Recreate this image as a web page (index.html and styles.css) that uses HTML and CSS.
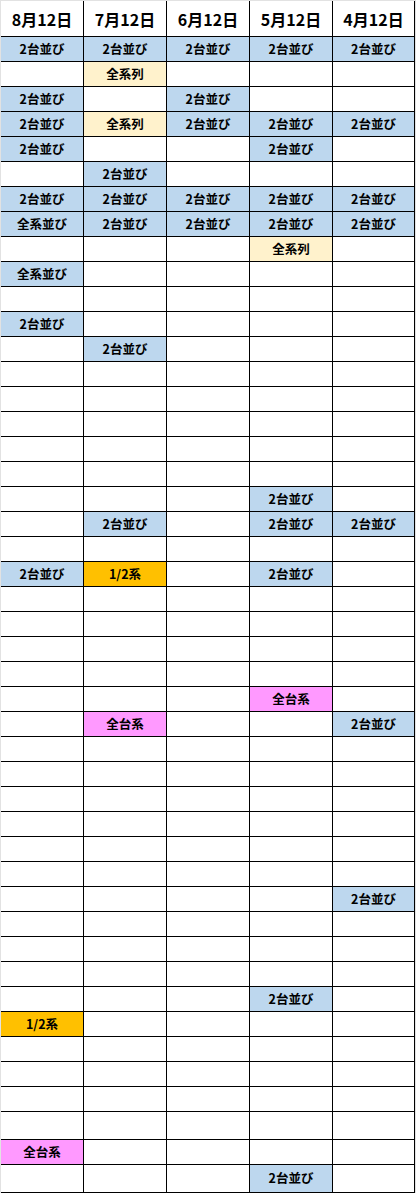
FILE: index.html
```html
<!DOCTYPE html>
<html lang="ja">
<head>
  <meta charset="UTF-8">
  <title>並び一覧</title>
  <link rel="stylesheet" href="styles.css">
</head>
<body>

<table class="sheet">
  <thead>
    <tr><th>8月12日</th><th>7月12日</th><th>6月12日</th><th>5月12日</th><th>4月12日</th></tr>
  </thead>
  <tbody>
    <tr><td class="blue">2台並び</td><td class="blue">2台並び</td><td class="blue">2台並び</td><td class="blue">2台並び</td><td class="blue">2台並び</td></tr>
    <tr><td></td><td class="cream">全系列</td><td></td><td></td><td></td></tr>
    <tr><td class="blue">2台並び</td><td></td><td class="blue">2台並び</td><td></td><td></td></tr>
    <tr><td class="blue">2台並び</td><td class="cream">全系列</td><td class="blue">2台並び</td><td class="blue">2台並び</td><td class="blue">2台並び</td></tr>
    <tr><td class="blue">2台並び</td><td></td><td></td><td class="blue">2台並び</td><td></td></tr>
    <tr><td></td><td class="blue">2台並び</td><td></td><td></td><td></td></tr>
    <tr><td class="blue">2台並び</td><td class="blue">2台並び</td><td class="blue">2台並び</td><td class="blue">2台並び</td><td class="blue">2台並び</td></tr>
    <tr><td class="blue">全系並び</td><td class="blue">2台並び</td><td class="blue">2台並び</td><td class="blue">2台並び</td><td class="blue">2台並び</td></tr>
    <tr><td></td><td></td><td></td><td class="cream">全系列</td><td></td></tr>
    <tr><td class="blue">全系並び</td><td></td><td></td><td></td><td></td></tr>
    <tr><td></td><td></td><td></td><td></td><td></td></tr>
    <tr><td class="blue">2台並び</td><td></td><td></td><td></td><td></td></tr>
    <tr><td></td><td class="blue">2台並び</td><td></td><td></td><td></td></tr>
    <tr><td></td><td></td><td></td><td></td><td></td></tr>
    <tr><td></td><td></td><td></td><td></td><td></td></tr>
    <tr><td></td><td></td><td></td><td></td><td></td></tr>
    <tr><td></td><td></td><td></td><td></td><td></td></tr>
    <tr><td></td><td></td><td></td><td></td><td></td></tr>
    <tr><td></td><td></td><td></td><td class="blue">2台並び</td><td></td></tr>
    <tr><td></td><td class="blue">2台並び</td><td></td><td class="blue">2台並び</td><td class="blue">2台並び</td></tr>
    <tr><td></td><td></td><td></td><td></td><td></td></tr>
    <tr><td class="blue">2台並び</td><td class="orange">1/2系</td><td></td><td class="blue">2台並び</td><td></td></tr>
    <tr><td></td><td></td><td></td><td></td><td></td></tr>
    <tr><td></td><td></td><td></td><td></td><td></td></tr>
    <tr><td></td><td></td><td></td><td></td><td></td></tr>
    <tr><td></td><td></td><td></td><td></td><td></td></tr>
    <tr><td></td><td></td><td></td><td class="pink">全台系</td><td></td></tr>
    <tr><td></td><td class="pink">全台系</td><td></td><td></td><td class="blue">2台並び</td></tr>
    <tr><td></td><td></td><td></td><td></td><td></td></tr>
    <tr><td></td><td></td><td></td><td></td><td></td></tr>
    <tr><td></td><td></td><td></td><td></td><td></td></tr>
    <tr><td></td><td></td><td></td><td></td><td></td></tr>
    <tr><td></td><td></td><td></td><td></td><td></td></tr>
    <tr><td></td><td></td><td></td><td></td><td></td></tr>
    <tr><td></td><td></td><td></td><td></td><td class="blue">2台並び</td></tr>
    <tr><td></td><td></td><td></td><td></td><td></td></tr>
    <tr><td></td><td></td><td></td><td></td><td></td></tr>
    <tr><td></td><td></td><td></td><td></td><td></td></tr>
    <tr><td></td><td></td><td></td><td class="blue">2台並び</td><td></td></tr>
    <tr><td class="orange">1/2系</td><td></td><td></td><td></td><td></td></tr>
    <tr><td></td><td></td><td></td><td></td><td></td></tr>
    <tr><td></td><td></td><td></td><td></td><td></td></tr>
    <tr><td></td><td></td><td></td><td></td><td></td></tr>
    <tr class="tall"><td></td><td></td><td></td><td></td><td></td></tr>
    <tr><td class="pink">全台系</td><td></td><td></td><td></td><td></td></tr>
    <tr class="tall"><td></td><td></td><td></td><td class="blue">2台並び</td><td></td></tr>
  </tbody>
</table>

</body>
</html>
```

FILE: styles.css
```css
body {
  margin: 0;
  background-color: #e2e2e2;
  font-family: "Noto Sans CJK JP", "Noto Sans", sans-serif;
  color: #000;
}

/* Sheet grid */
.sheet {
  margin: 1px 0 0 1px;
  width: 414px;
  table-layout: fixed;
  border-collapse: separate;
  border-spacing: 0;
  background-color: #fff;
}

.sheet th,
.sheet td {
  padding: 0;
  border-right: 1px solid #000;
  border-bottom: 1px solid #000;
  text-align: center;
  vertical-align: middle;
  font-weight: 700;
  line-height: 1;
}

.sheet th {
  width: 82px;
  height: 35px;
  font-size: 16px;
}

.sheet th:last-child {
  width: 81px;
}

.sheet td {
  height: 24px;
  font-size: 12.5px;
}

.sheet tr.tall td {
  height: 27px;
}

/* Cell colours */
.blue {
  background-color: #bdd7ee;
}

.cream {
  background-color: #fff2cc;
}

.orange {
  background-color: #ffc000;
}

.pink {
  background-color: #ff99ff;
}
```
